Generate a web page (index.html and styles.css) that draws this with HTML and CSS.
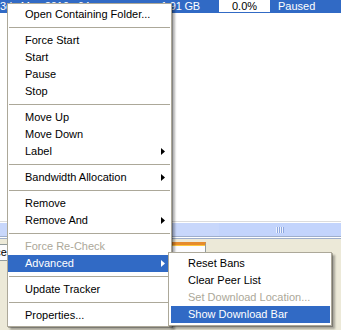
FILE: index.html
```html
<!DOCTYPE html>
<html lang="en">
  <head>
    <meta charset="utf-8" />
    <meta name="viewport" content="width=device-width, initial-scale=1.0" />
    <title>Torrent menu</title>
    <link rel="stylesheet" href="styles.css">
  </head>

  <body>
    <div class="window">
      <div class="list">
        <div class="row selected">
          <span class="name">3ds Max 2010 x64</span>
          <span class="size">1.91 GB</span>
          <span class="progress">0.0%</span>
          <span class="status">Paused</span>
        </div>
      </div>

      <div class="hscroll">
        <span class="thumb"><span class="grip"></span></span>
      </div>

      <div class="panel">
        <div class="tabs">
          <span class="tab cut">Trace</span>
          <span class="tab">General</span>
          <span class="tab">Trackers</span>
          <span class="tab active">Peers</span>
        </div>
      </div>
    </div>

    <!-- højreklik menu -->
    <ul class="menu main-menu">
      <li><span>Open Containing Folder...</span></li>
      <li class="sep"></li>
      <li><span>Force Start</span></li>
      <li><span>Start</span></li>
      <li><span>Pause</span></li>
      <li><span>Stop</span></li>
      <li class="sep"></li>
      <li><span>Move Up</span></li>
      <li><span>Move Down</span></li>
      <li><span>Label</span><svg class="arrow" width="4" height="7"><path d="M0 0L4 3.5L0 7z" /></svg></li>
      <li class="sep"></li>
      <li><span>Bandwidth Allocation</span><svg class="arrow" width="4" height="7"><path d="M0 0L4 3.5L0 7z" /></svg></li>
      <li class="sep"></li>
      <li><span>Remove</span></li>
      <li><span>Remove And</span><svg class="arrow" width="4" height="7"><path d="M0 0L4 3.5L0 7z" /></svg></li>
      <li class="sep"></li>
      <li class="disabled"><span>Force Re-Check</span></li>
      <li class="hover"><span>Advanced</span><svg class="arrow" width="4" height="7"><path d="M0 0L4 3.5L0 7z" /></svg></li>
      <li class="sep"></li>
      <li><span>Update Tracker</span></li>
      <li class="sep"></li>
      <li><span>Properties...</span></li>
    </ul>

    <!-- undermenu til Advanced -->
    <ul class="menu sub-menu">
      <li><span>Reset Bans</span></li>
      <li><span>Clear Peer List</span></li>
      <li class="disabled"><span>Set Download Location...</span></li>
      <li class="hover"><span>Show Download Bar</span></li>
    </ul>
  </body>
</html>
```

FILE: styles.css
```css
body {
  margin: 0;
  font-family: "Liberation Sans", Arial, sans-serif;
  font-size: 11px;
  background-color: #ece9d8;
  overflow: hidden;
}

.window {
  width: 341px;
  height: 330px;
  display: flex;
  flex-direction: column;
}

.list {
  height: 221px;
  background-color: #fff;
  border-bottom: 1px solid #dcdcdc;
}

.row {
  display: flex;
  height: 13px;
  line-height: 13px;
  white-space: nowrap;
}

.selected {
  background-color: #316ac5;
  color: #fff;
}

.name {
  width: 120px;
  overflow: hidden;
}

.size {
  width: 80px;
  text-align: right;
  letter-spacing: -0.2px;
}

.progress {
  width: 51px;
  height: 12px;
  margin-left: 19px;
  background-color: #fff;
  color: #000;
  text-align: center;
  line-height: 12px;
}

.status {
  padding-left: 8px;
}

.hscroll {
  display: flex;
  height: 13px;
  border-top: 1px solid #fff;
  border-bottom: 1px solid #9eaecb;
  background-color: #c8d7fb;
}

.thumb {
  display: flex;
  flex: 1;
  margin-left: 219px;
  justify-content: center;
  align-items: center;
  background-color: #c3d4fc;
}

.grip {
  width: 8px;
  height: 6px;
  background: repeating-linear-gradient(90deg, #eef3fe 0 1px, #8fa8e0 1px 2px);
}

.panel {
  flex: 1;
  border-top: 1px solid #fff;
  box-shadow: inset 0 1px 0 #9eaecb;
  padding-top: 4px;
}

.tabs {
  display: flex;
  align-items: flex-start;
  width: 206px;
}

.tab {
  height: 15px;
  margin-top: 2px;
  padding: 0 6px;
  line-height: 15px;
  background-color: #fcfcfe;
  border: 1px solid #919b9c;
  border-left: none;
  white-space: nowrap;
}

.cut {
  display: flex;
  justify-content: flex-end;
  width: 7px;
  padding: 0;
  overflow: hidden;
}

.active {
  flex: 1;
  height: 17px;
  margin-top: 0;
  line-height: 19px;
  border-top: 3px solid #e68b2c;
  box-shadow: inset 0 1px 0 #ffc73c;
}

.menu {
  position: absolute;
  margin: 0;
  padding: 2px 0;
  list-style: none;
  background-color: #fff;
  border: 1px solid #aca899;
  box-shadow: 1px 1px 0 rgba(0, 0, 0, 0.25), 3px 3px 2px rgba(0, 0, 0, 0.3);
}

.main-menu {
  left: 7px;
  top: 3px;
  width: 163px;
}

.sub-menu {
  left: 168px;
  top: 252px;
  width: 159px;
  padding: 2px 1px 2px 2px;
}

.menu li {
  display: flex;
  justify-content: space-between;
  align-items: center;
  height: 17px;
  line-height: 17px;
  padding: 0 6px 0 17px;
  white-space: nowrap;
}

.menu li.sep {
  height: 1px;
  margin: 4px 1px;
  padding: 0;
  background-color: #aca899;
}

.menu li.disabled {
  color: #aca899;
}

.menu li.hover {
  background-color: #316ac5;
  color: #fff;
}

.arrow {
  fill: #000;
}

.hover .arrow {
  fill: #fff;
}
```
